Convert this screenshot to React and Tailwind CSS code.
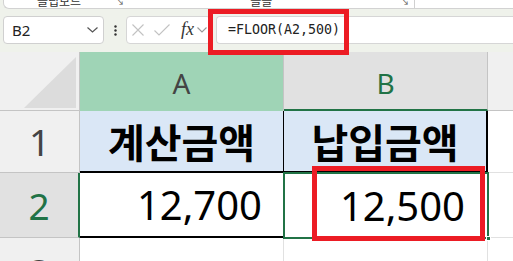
import React from 'react';

export default function App() {
  return (
    <div className="w-[513px] h-[261px] overflow-hidden bg-[#eff2eb] relative font-['Noto_Sans','Noto_Sans_CJK_KR',sans-serif]">
      {/* Ribbon bottom edge */}
      <div className="h-[9px] ml-[3px] bg-white border-l border-b border-[#d2d2d2] rounded-bl-[6px] overflow-hidden flex text-[12px] leading-none text-[#333] font-['Noto_Sans_CJK_KR',sans-serif]">
        <span className="ml-[33px] -mt-[5px]">클립보드</span>
        <span className="ml-[34px] -mt-[3px] text-[9px] text-[#555]">↘</span>
        <span className="ml-[126px] -mt-[5px]">글꼴</span>
        <span className="ml-[128px] -mt-[3px] text-[9px] text-[#555]">↘</span>
        <span className="ml-[5px] w-px bg-[#d0d0d0]"></span>
      </div>

      {/* Formula bar */}
      <div className="relative flex items-start h-[43px] pt-[7px] pl-[3px]">
        <div className="w-[101px] h-[28px] bg-white border border-[#d0d0d0] rounded-[4px] flex items-center justify-between pl-[8px] pr-[5px]">
          <span className="text-[15px] text-[#222] leading-none">B2</span>
          <svg width="11" height="6" viewBox="0 0 11 6" fill="none" stroke="#555" strokeWidth="1.2">
            <path d="M0.5 0.5 L5.5 5 L10.5 0.5" />
          </svg>
        </div>
        <div className="w-[22px] h-[28px] flex items-center justify-center">
          <svg width="3" height="11" viewBox="0 0 3 11" fill="#333">
            <circle cx="1.5" cy="1.5" r="1.2" />
            <circle cx="1.5" cy="5.5" r="1.2" />
            <circle cx="1.5" cy="9.5" r="1.2" />
          </svg>
        </div>
        <div className="w-[85px] h-[28px] bg-white border border-[#d6d6d6] rounded-[4px] flex items-center pl-[5px]">
          <svg width="12" height="12" viewBox="0 0 12 12" stroke="#c2c2c2" strokeWidth="1.1">
            <path d="M0.5 0.5 L11.5 11.5 M11.5 0.5 L0.5 11.5" />
          </svg>
          <svg className="ml-[10px]" width="16" height="12" viewBox="0 0 16 12" fill="none" stroke="#c2c2c2" strokeWidth="1.1">
            <path d="M0.5 6.5 L5 11 L15.5 0.5" />
          </svg>
          <span className="ml-[11px] font-['Liberation_Serif',serif] italic text-[18px] leading-none text-[#333] -mt-[2px]">fx</span>
          <svg className="ml-[3px]" width="10" height="6" viewBox="0 0 10 6" fill="none" stroke="#999" strokeWidth="1.1">
            <path d="M0.5 0.5 L5 5 L9.5 0.5" />
          </svg>
        </div>
        <div className="ml-[5px] flex-1 h-[28px] bg-white border border-r-0 border-[#d6d6d6] rounded-l-[4px] flex items-center pl-[11px]">
          <span className="font-['DejaVu_Sans_Mono',monospace] text-[13.3px] text-[#222] leading-none">=FLOOR(A2,500)</span>
        </div>
        {/* annotation */}
        <div className="absolute left-[208px] top-0 w-[141px] h-[46px] border-[5px] border-[#ec1c24]"></div>
      </div>

      {/* Sheet grid */}
      <div className="grid grid-cols-[80px_204px_204px_1fr] grid-rows-[59px_62px_65px_1fr] h-[209px]">
        {/* header row */}
        <div className="bg-[#f0f0f0] border-r border-b border-[#c4c4c4] relative">
          <svg className="absolute left-[24px] top-[5px]" width="52" height="51" viewBox="0 0 52 51">
            <path d="M52 0 L52 51 L0 51 Z" fill="#dcdcdc" />
          </svg>
        </div>
        <div className="bg-[#9fd4b6] border-r border-[#c4c4c4] flex items-center justify-center">
          <span className="text-[28px] text-[#444] leading-none mt-[2px]">A</span>
        </div>
        <div className="bg-[#e1e1e1] border-r border-[#c4c4c4] border-b-2 border-b-[#217346] flex items-center justify-center">
          <span className="text-[28px] text-[#217346] leading-none mt-[4px]">B</span>
        </div>
        <div className="bg-[#f0f0f0] border-b border-[#c4c4c4]"></div>

        {/* row 1 */}
        <div className="bg-[#f0f0f0] border-r border-b border-[#c4c4c4] flex items-center justify-center">
          <span className="text-[37px] text-[#444] leading-none">1</span>
        </div>
        <div className="bg-[#dae7f6] border-r border-r-black border-b-2 border-b-black flex items-center justify-center">
          <span className="font-['Noto_Sans_CJK_KR',sans-serif] font-bold text-[40px] text-black leading-none">계산금액</span>
        </div>
        <div className="bg-[#dae7f6] border-r-2 border-r-black border-b-2 border-b-black flex items-center justify-center">
          <span className="font-['Noto_Sans_CJK_KR',sans-serif] font-bold text-[40px] text-black leading-none">납입금액</span>
        </div>
        <div className="bg-white border-b border-[#e1e1e1]"></div>

        {/* row 2 */}
        <div className="bg-[#e1e1e1] border-r-2 border-r-[#217346] border-b border-b-[#c4c4c4] flex items-center justify-center">
          <span className="text-[37px] text-[#217346] leading-none">2</span>
        </div>
        <div className="bg-white border-b-2 border-b-black flex items-center justify-end pr-[22px]">
          <span className="text-[40px] text-black leading-none">12,700</span>
        </div>
        <div className="bg-white relative flex items-center justify-end pr-[23px]">
          <span className="text-[40px] text-black leading-none">12,500</span>
          <div className="absolute -left-px -top-px -right-px -bottom-px border-2 border-[#217346]"></div>
          <div className="absolute -right-[3px] -bottom-[3px] w-[5px] h-[5px] bg-[#217346] border border-white"></div>
          <div className="absolute left-[28px] -top-[7px] w-[173px] h-[75px] border-[5px] border-[#ec1c24]"></div>
        </div>
        <div className="bg-white border-b border-[#e1e1e1]"></div>

        {/* row 3 */}
        <div className="bg-[#f0f0f0] border-r border-[#c4c4c4] flex justify-center overflow-hidden">
          <span className="text-[37px] text-[#444] leading-none mt-[15px]">3</span>
        </div>
        <div className="bg-white border-r border-[#e1e1e1]"></div>
        <div className="bg-white border-r border-[#e1e1e1]"></div>
        <div className="bg-white"></div>
      </div>
    </div>
  );
}
